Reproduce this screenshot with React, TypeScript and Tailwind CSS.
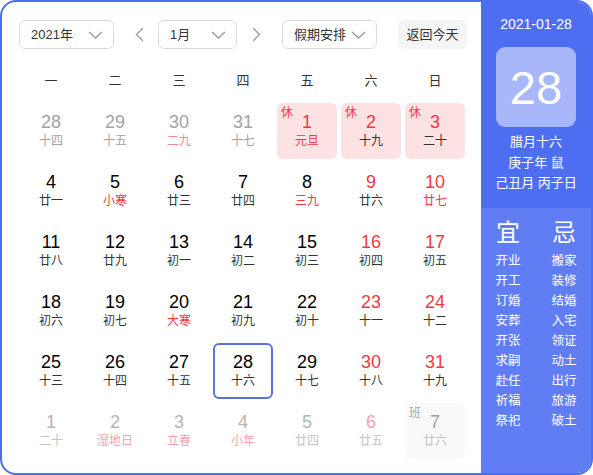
import React from 'react';

type Cell = {
  day: number;
  lunar: string;
  kind?: 'prev' | 'next';
  weekend?: boolean;
  redLunar?: boolean;
  rest?: boolean;
  work?: boolean;
  today?: boolean;
};

const WEEKDAYS = ['一', '二', '三', '四', '五', '六', '日'];

const CELLS: Cell[] = [
  { day: 28, lunar: '十四', kind: 'prev' },
  { day: 29, lunar: '十五', kind: 'prev' },
  { day: 30, lunar: '二九', kind: 'prev', redLunar: true },
  { day: 31, lunar: '十七', kind: 'prev' },
  { day: 1, lunar: '元旦', rest: true, weekend: true, redLunar: true },
  { day: 2, lunar: '十九', rest: true, weekend: true },
  { day: 3, lunar: '二十', rest: true, weekend: true },

  { day: 4, lunar: '廿一' },
  { day: 5, lunar: '小寒', redLunar: true },
  { day: 6, lunar: '廿三' },
  { day: 7, lunar: '廿四' },
  { day: 8, lunar: '三九', redLunar: true },
  { day: 9, lunar: '廿六', weekend: true },
  { day: 10, lunar: '廿七', weekend: true, redLunar: true },

  { day: 11, lunar: '廿八' },
  { day: 12, lunar: '廿九' },
  { day: 13, lunar: '初一' },
  { day: 14, lunar: '初二' },
  { day: 15, lunar: '初三' },
  { day: 16, lunar: '初四', weekend: true },
  { day: 17, lunar: '初五', weekend: true },

  { day: 18, lunar: '初六' },
  { day: 19, lunar: '初七' },
  { day: 20, lunar: '大寒', redLunar: true },
  { day: 21, lunar: '初九' },
  { day: 22, lunar: '初十' },
  { day: 23, lunar: '十一', weekend: true },
  { day: 24, lunar: '十二', weekend: true },

  { day: 25, lunar: '十三' },
  { day: 26, lunar: '十四' },
  { day: 27, lunar: '十五' },
  { day: 28, lunar: '十六', today: true },
  { day: 29, lunar: '十七' },
  { day: 30, lunar: '十八', weekend: true },
  { day: 31, lunar: '十九', weekend: true },

  { day: 1, lunar: '二十', kind: 'next' },
  { day: 2, lunar: '湿地日', kind: 'next', redLunar: true },
  { day: 3, lunar: '立春', kind: 'next', redLunar: true },
  { day: 4, lunar: '小年', kind: 'next', redLunar: true },
  { day: 5, lunar: '廿四', kind: 'next' },
  { day: 6, lunar: '廿五', kind: 'next', weekend: true },
  { day: 7, lunar: '廿六', kind: 'next', work: true },
];

const YI = ['开业', '开工', '订婚', '安葬', '开张', '求嗣', '赴任', '祈福', '祭祀'];
const JI = ['搬家', '装修', '结婚', '入宅', '领证', '动土', '出行', '旅游', '破土'];

function Chevron() {
  return (
    <svg width="15" height="8" viewBox="0 0 15 8" fill="none">
      <path d="M1 1l6.5 6L14 1" stroke="#9a9a9a" strokeWidth="1.3" />
    </svg>
  );
}

function Arrow({ dir }: { dir: 'left' | 'right' }) {
  return (
    <svg width="9" height="15" viewBox="0 0 9 15" fill="none">
      <path
        d={dir === 'left' ? 'M8 1L1.5 7.5 8 14' : 'M1 1l6.5 6.5L1 14'}
        stroke="#9a9a9a"
        strokeWidth="1.3"
      />
    </svg>
  );
}

function Select({ label, width }: { label: string; width: string }) {
  return (
    <div
      className={`${width} h-[29px] flex items-center justify-between pl-[11px] pr-[10px] border border-[#dcdcdc] rounded-[6px] text-[13px] text-[#333]`}
    >
      <span>{label}</span>
      <Chevron />
    </div>
  );
}

function DayCell({ c }: { c: Cell }) {
  let numColor = 'text-black';
  let lunarColor = 'text-[#333]';
  if (c.kind === 'prev') {
    numColor = 'text-[#a3a3a3]';
    lunarColor = c.redLunar ? 'text-[#f08a92]' : 'text-[#a3a3a3]';
  } else if (c.kind === 'next') {
    numColor = c.weekend ? 'text-[#f4a3aa]' : c.work ? 'text-[#9aa0ab]' : 'text-[#b5b5b5]';
    lunarColor = c.redLunar ? 'text-[#f4a3aa]' : 'text-[#c4c4c4]';
  } else {
    if (c.weekend) numColor = 'text-[#f0393f]';
    if (c.redLunar) lunarColor = 'text-[#f0393f]';
  }

  let box = 'border-2 border-transparent';
  if (c.rest) box = 'border-2 border-transparent bg-[#fde2e3]';
  if (c.today) box = 'border-2 border-[#5b73e0]';
  if (c.work) box = 'border-2 border-transparent bg-[#f9f9fa]';

  return (
    <div className="h-[60px] p-[2px]">
      <div className={`relative h-full rounded-[6px] flex flex-col items-center justify-center ${box}`}>
        {c.rest && (
          <span className="absolute left-[2px] top-[1px] text-[12px] leading-[14px] text-[#f0393f]">休</span>
        )}
        {c.work && (
          <span className="absolute left-[2px] top-[1px] text-[12px] leading-[14px] text-[#aaa]">班</span>
        )}
        <span className={`text-[18px] leading-[20px] ${numColor}`}>{c.day}</span>
        <span className={`text-[12px] leading-[18px] ${lunarColor}`}>{c.lunar}</span>
      </div>
    </div>
  );
}

export default function App() {
  return (
    <div
      className="w-[593px] h-[475px] bg-white"
      style={{ fontFamily: '"Liberation Sans", "Noto Sans CJK SC", sans-serif' }}
    >
      <div className="w-full h-full flex border-2 border-[#4e6ef2] rounded-[16px] overflow-hidden">
        <div className="flex-1 pl-[17px] pt-[18px]">
          <div className="flex items-center">
            <Select label="2021年" width="w-[95px]" />
            <div className="ml-[21px] mr-[14px] flex">
              <Arrow dir="left" />
            </div>
            <Select label="1月" width="w-[79px]" />
            <div className="ml-[15px] mr-[21px] flex">
              <Arrow dir="right" />
            </div>
            <Select label="假期安排" width="w-[95px]" />
            <div className="ml-[21px] w-[69px] h-[29px] rounded-[6px] bg-[#f5f5f6] flex items-center justify-center text-[13px] text-[#333]">
              返回今天
            </div>
          </div>

          <div className="mt-[17px] h-[30px] grid grid-cols-[repeat(7,64px)] items-center">
            {WEEKDAYS.map((w) => (
              <div key={w} className="text-center text-[13px] text-[#333]">
                {w}
              </div>
            ))}
          </div>

          <div className="mt-[5px] grid grid-cols-[repeat(7,64px)]">
            {CELLS.map((c, i) => (
              <DayCell key={i} c={c} />
            ))}
          </div>
        </div>

        <div className="w-[110px] flex flex-col bg-[#4e6ef2] text-white">
          <div className="h-[206px] flex flex-col items-center pt-[12px]">
            <div className="text-[14px] leading-[20px]">2021-01-28</div>
            <div className="mt-[13px] w-[80px] h-[80px] rounded-[9px] bg-white/50 flex items-center justify-center text-[47px] leading-none">
              28
            </div>
            <div className="mt-[5px] text-[13px] leading-[20.5px] text-center">
              <div>腊月十六</div>
              <div>庚子年 鼠</div>
              <div>己丑月 丙子日</div>
            </div>
          </div>
          <div className="flex-1 bg-white/10 flex justify-center gap-[31px] pt-[11px]">
            <div className="flex flex-col items-center">
              <div className="text-[24px] leading-[28px] mb-[4px]">宜</div>
              {YI.map((t) => (
                <div key={t} className="text-[12.5px] leading-[20px]">
                  {t}
                </div>
              ))}
            </div>
            <div className="flex flex-col items-center">
              <div className="text-[24px] leading-[28px] mb-[4px]">忌</div>
              {JI.map((t) => (
                <div key={t} className="text-[12.5px] leading-[20px]">
                  {t}
                </div>
              ))}
            </div>
          </div>
        </div>
      </div>
    </div>
  );
}
